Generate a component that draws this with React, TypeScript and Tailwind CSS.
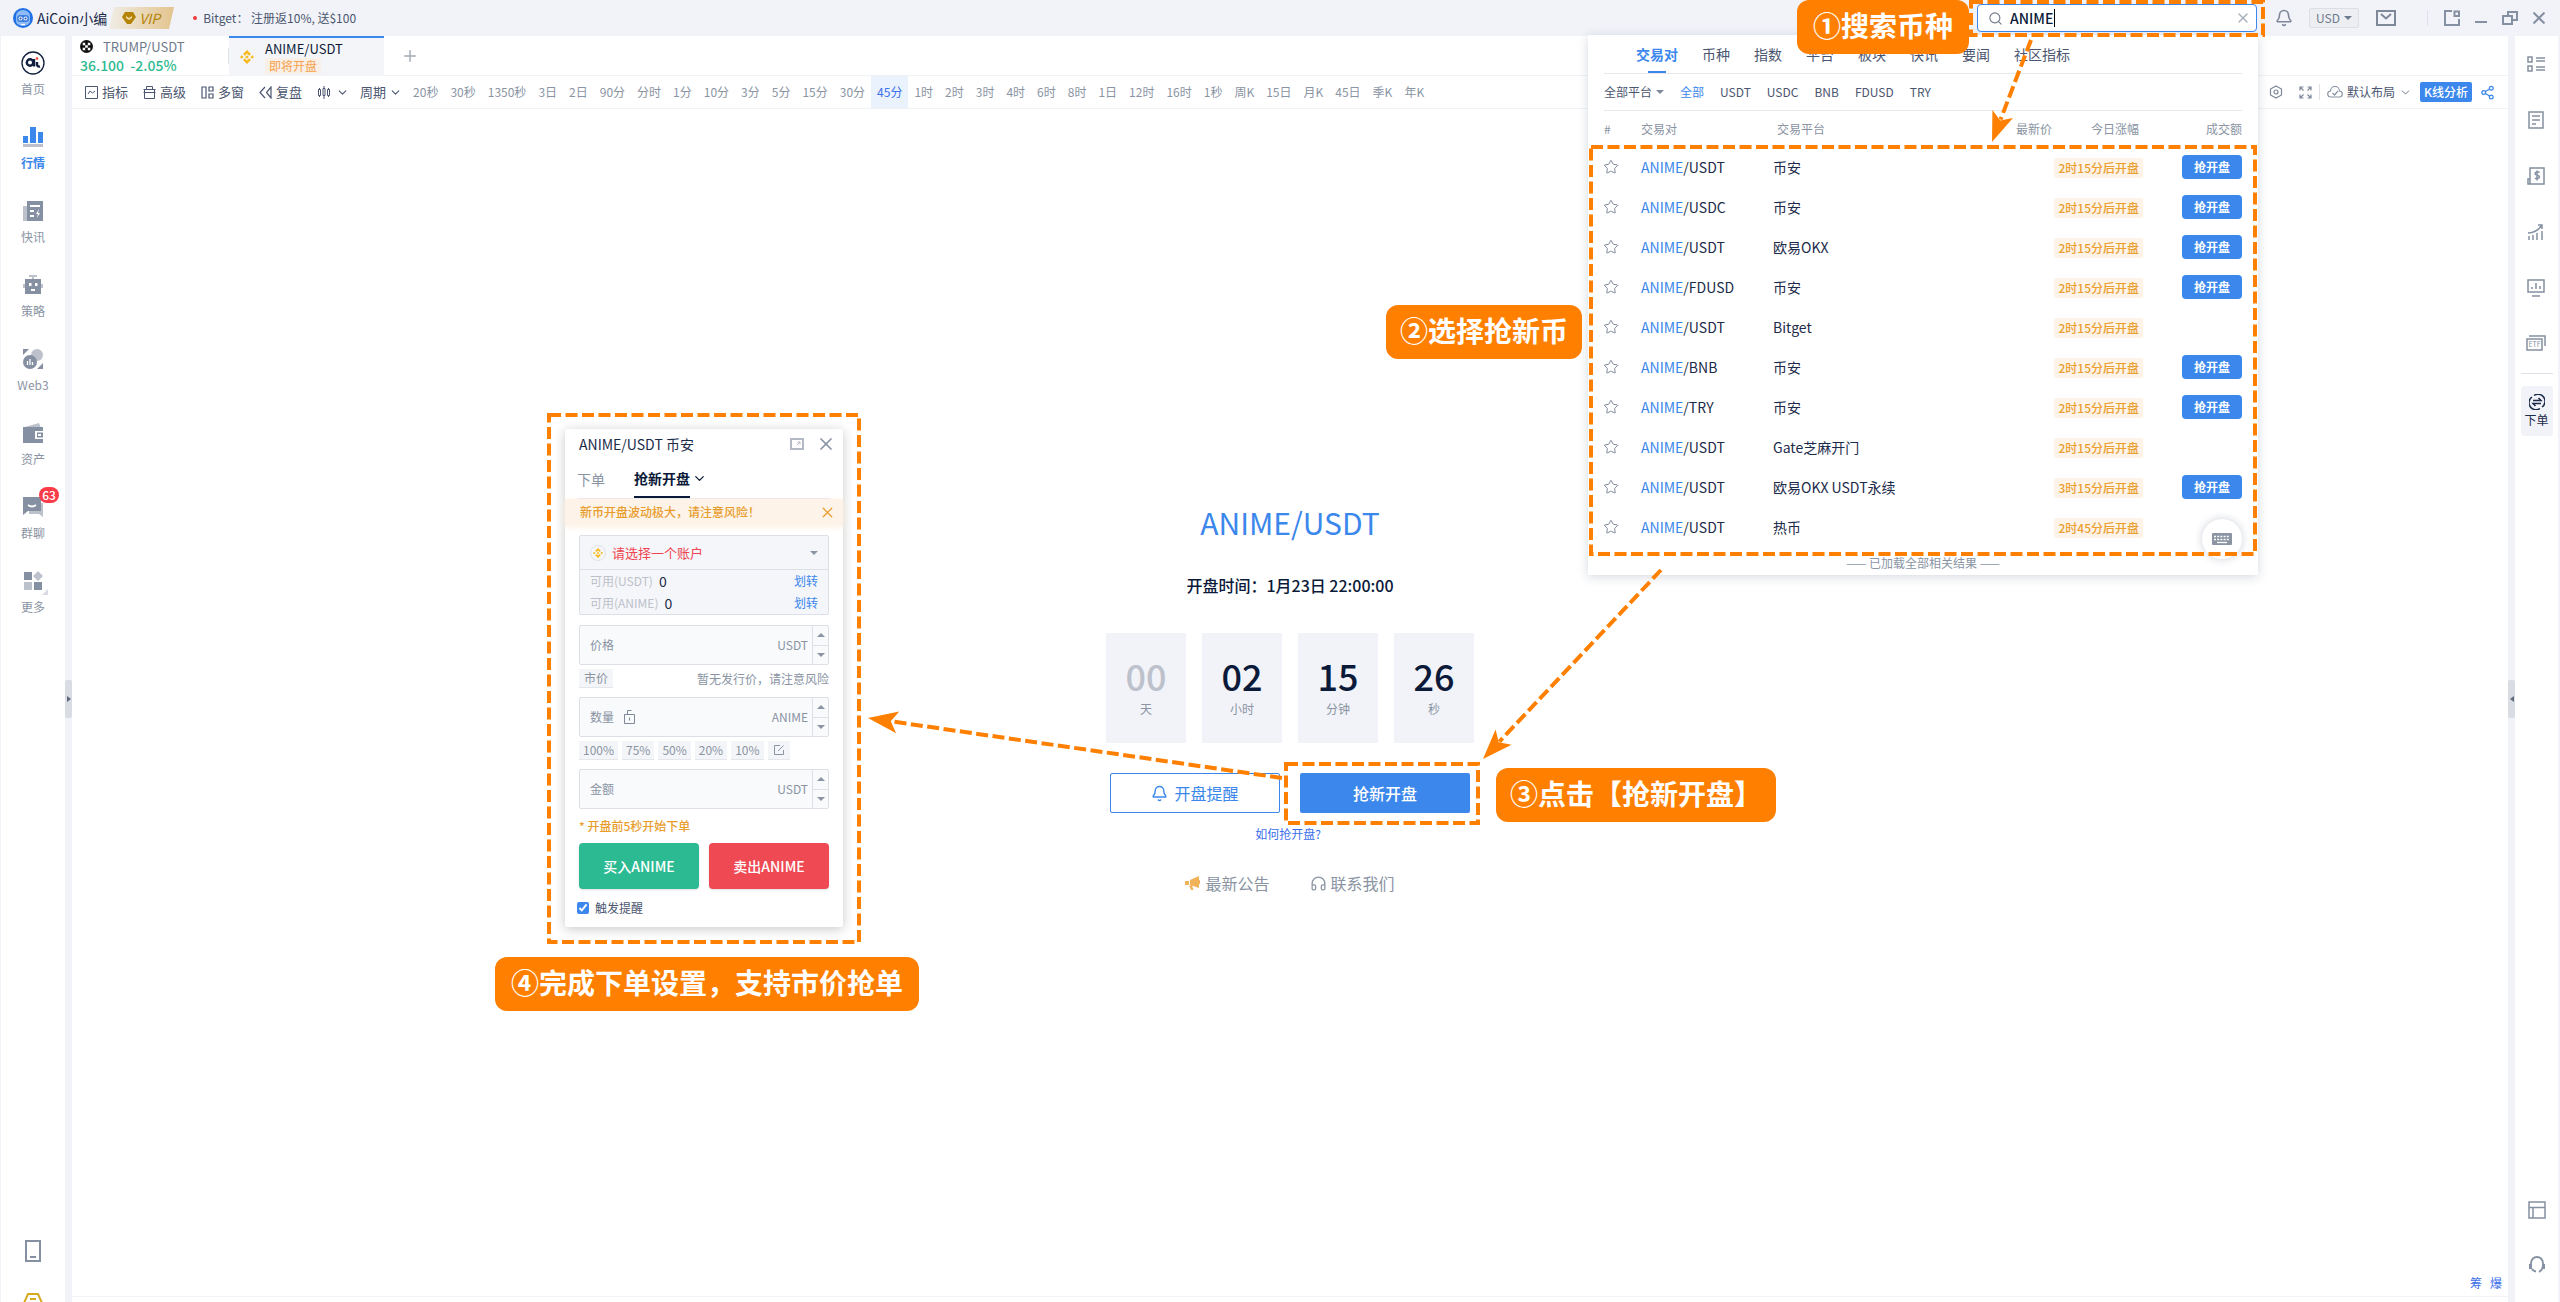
import type { ReactNode } from 'react';
import { Bell, ChevronDown, Headphones, Plus, Search, Share2, Star, X } from 'lucide-react';

const periods = [
  '20秒', '30秒', '1350秒', '3日', '2日', '90分', '分时', '1分', '10分', '3分', '5分', '15分', '30分', '45分',
  '1时', '2时', '3时', '4时', '6时', '8时', '1日', '12时', '16时', '1秒', '周K', '15日', '月K', '45日', '季K', '年K',
];

const results = [
  { quote: 'USDT', exchange: '币安', opens: '2时15分后开盘', canSnipe: true },
  { quote: 'USDC', exchange: '币安', opens: '2时15分后开盘', canSnipe: true },
  { quote: 'USDT', exchange: '欧易OKX', opens: '2时15分后开盘', canSnipe: true },
  { quote: 'FDUSD', exchange: '币安', opens: '2时15分后开盘', canSnipe: true },
  { quote: 'USDT', exchange: 'Bitget', opens: '2时15分后开盘', canSnipe: false },
  { quote: 'BNB', exchange: '币安', opens: '2时15分后开盘', canSnipe: true },
  { quote: 'TRY', exchange: '币安', opens: '2时15分后开盘', canSnipe: true },
  { quote: 'USDT', exchange: 'Gate芝麻开门', opens: '2时15分后开盘', canSnipe: false },
  { quote: 'USDT', exchange: '欧易OKX USDT永续', opens: '3时15分后开盘', canSnipe: true },
  { quote: 'USDT', exchange: '热币', opens: '2时45分后开盘', canSnipe: false },
];

const countdown = [
  { value: '00', unit: '天' },
  { value: '02', unit: '小时' },
  { value: '15', unit: '分钟' },
  { value: '26', unit: '秒' },
];

function Caret({ up = false, className = '' }: { up?: boolean; className?: string }) {
  return (
    <svg className={`h-1 w-2 shrink-0 ${className}`} viewBox="0 0 8 4" fill="currentColor" aria-hidden="true">
      <path d={up ? 'M0 4L4 0L8 4Z' : 'M0 0H8L4 4Z'} />
    </svg>
  );
}

function BinanceIcon({ className = 'size-4' }: { className?: string }) {
  return (
    <svg className={className} viewBox="0 0 16 16" fill="#f8b91c" aria-hidden="true">
      <path d="M8 0l4.500 4.500-2 2L8 4l-2.500 2.500-2-2zM2 6l2 2-2 2-2-2zM14 6l2 2-2 2-2-2zM8 6l2 2-2 2-2-2zM5.500 9.500L8 12l2.500-2.500 2 2L8 16l-4.500-4.500z" />
    </svg>
  );
}

// Dashed highlight drawn round the parent element's area
function Frame({ className }: { className: string }) {
  return (
    <div className={`pointer-events-none absolute z-30 ${className}`}>
      <svg className="block h-full w-full overflow-visible" aria-hidden="true">
        <rect width="100%" height="100%" fill="none" stroke="#ff8000" strokeWidth="4" strokeDasharray="12 4.500" />
      </svg>
    </div>
  );
}

function StepLabel({ className, children }: { className: string; children: ReactNode }) {
  return (
    <div className={`absolute z-40 flex h-[54px] items-center rounded-xl bg-[#ff8000] pb-1 text-[28px] font-bold whitespace-nowrap text-white ${className}`}>
      {children}
    </div>
  );
}

function Arrow({ x1, y1, x2, y2 }: { x1: number; y1: number; x2: number; y2: number }) {
  const angle = (Math.atan2(y1 - y2, x1 - x2) * 180) / Math.PI;
  const length = Math.hypot(x1 - x2, y1 - y2);
  return (
    <g transform={`translate(${x2} ${y2}) rotate(${angle})`}>
      <path d={`M${length} 0H24`} stroke="#ff8000" strokeWidth="4" strokeDasharray="12 4.500" />
      <path d="M0 0L30 -11L23 0L30 11Z" fill="#ff8000" />
    </g>
  );
}

function SearchPanel() {
  return (
    <div className="absolute top-[31px] -right-px z-20 w-[670px] bg-white px-4 pb-2 text-xs shadow-[0_2px_10px_rgba(30,45,80,0.18)]">
      <nav className="flex h-[39px] items-center gap-6 border-b border-[#e6e8ec] pl-8 text-sm text-[#4b5670]">
        <a href="#pair" className="relative flex h-full items-center font-bold text-[#3b87ec]">
          交易对
          <span className="absolute bottom-0 left-3 h-0.5 w-[18px] bg-[#3b87ec]" />
        </a>
        {['币种', '指数', '平台', '板块', '快讯', '要闻', '社区指标'].map((tab) => (
          <a key={tab} href="#tab">{tab}</a>
        ))}
      </nav>
      <div className="flex h-[37px] items-center gap-4 border-b border-[#e6e8ec] text-[#4b5670]">
        <button className="flex items-center gap-1">
          全部平台
          <Caret className="text-[#7e8899]" />
        </button>
        <button className="text-[#3b87ec]">全部</button>
        {['USDT', 'USDC', 'BNB', 'FDUSD', 'TRY'].map((q) => (
          <button key={q}>{q}</button>
        ))}
      </div>
      <div className="relative">
        <table className="w-full table-fixed">
          <colgroup>
            <col className="w-[37px]" />
            <col className="w-[132px]" />
            <col />
            <col className="w-[100px]" />
            <col className="w-[91px]" />
            <col className="w-[99px]" />
          </colgroup>
          <thead>
            <tr className="h-9 text-left text-[#8a94a3]">
              <th className="font-normal">#</th>
              <th className="font-normal">交易对</th>
              <th className="pl-1 font-normal">交易平台</th>
              <th className="text-right font-normal">最新价</th>
              <th className="pr-1 text-right font-normal">今日涨幅</th>
              <th className="text-right font-normal">成交额</th>
            </tr>
          </thead>
          <tbody>
            {results.map((r, i) => (
              <tr key={i} className="h-10 text-sm text-[#1c2b4a]">
                <td>
                  <Star size={16} strokeWidth={1.5} className="-ml-px text-[#7e8899]" />
                </td>
                <td className="whitespace-nowrap">
                  <span className="text-[#3b87ec]">ANIME</span>/{r.quote}
                </td>
                <td colSpan={2}>{r.exchange}</td>
                <td className="text-right">
                  <span className="inline-block h-5 rounded-xs bg-[#fdf3e8] px-1 text-xs leading-5 font-medium whitespace-nowrap text-[#eaa030]">
                    {r.opens}
                  </span>
                </td>
                <td className="text-right">
                  {r.canSnipe && (
                    <button className="h-6 w-[60px] rounded bg-[#3b87ec] text-xs font-bold text-white">抢开盘</button>
                  )}
                </td>
              </tr>
            ))}
          </tbody>
        </table>
        <Frame className="top-9 -right-[13px] -left-[13px] h-[407px]" />
      </div>
      <p className="h-5 pt-2 text-center leading-4 text-[#8a94a3]">—— 已加载全部相关结果 ——</p>
      <button
        aria-label="键盘"
        className="absolute right-4 bottom-4 flex size-10 items-center justify-center rounded-full bg-white shadow-[0_0_8px_rgba(30,45,80,0.22)]"
      >
        <svg width="20" height="12" viewBox="0 0 20 12">
          <rect width="20" height="12" rx="1" fill="#8a94a3" />
          <path d="M2 3.500H18M2 6.500H18" stroke="#fff" strokeWidth="1.500" strokeDasharray="2 1.200" />
          <path d="M5 9.500H15" stroke="#fff" strokeWidth="1.300" />
        </svg>
      </button>
    </div>
  );
}

function Header() {
  return (
    <header className="relative z-20 flex h-9 shrink-0 items-center bg-[#f1f3f8] pl-[13px]">
      <svg width="20" height="20" viewBox="0 0 20 20" aria-hidden="true">
        <circle cx="10" cy="10" r="10" fill="#1f6fe5" />
        <path d="M3 8a7 6 0 0 1 14 0v5a7 5 0 0 1-14 0z" fill="#8fbcf5" />
        <rect x="4" y="7" width="12" height="7" rx="3" fill="#3f7fe0" />
        <circle cx="7.500" cy="10.500" r="2" fill="#e9f2ff" />
        <circle cx="12.500" cy="10.500" r="2" fill="#e9f2ff" />
        <circle cx="7.500" cy="10.500" r="1" fill="#2450a8" />
        <circle cx="12.500" cy="10.500" r="1" fill="#2450a8" />
        <path d="M8 16.500h4" stroke="#fff" strokeWidth="1.200" />
      </svg>
      <span className="ml-1 text-sm text-[#1c2b4a]">AiCoin小编</span>
      <a href="#vip" className="relative ml-0.5 flex h-[22px] w-[65px] items-center">
        <svg className="absolute inset-0" width="65" height="22" aria-hidden="true">
          <defs>
            <linearGradient id="vip" x1="0" x2="1">
              <stop offset="0" stopColor="#f0ede6" />
              <stop offset="1" stopColor="#e3c48e" />
            </linearGradient>
          </defs>
          <path d="M5 0H65L60 22H0Z" fill="url(#vip)" />
          <path d="M16 5h8l3 5-5 7h-4l-5-7z" fill="#b48407" />
          <path d="M17 9l3 2 3-2v2l-3 2-3-2z" fill="#f3dca7" />
        </svg>
        <span className="relative ml-[30px] text-sm text-[#b48407] italic">VIP</span>
      </a>
      <span className="ml-[19px] size-1 rounded-full bg-[#f23c3c]" />
      <span className="ml-1.5 text-xs text-[#4b5670]">Bitget： 注册返10%, 送$100</span>

      <div className="relative mr-[18px] ml-auto h-7 w-[280px]">
        <label className="flex h-7 items-center rounded border border-[#3b87ec] bg-white pl-2.5">
          <Search size={15} strokeWidth={1.800} className="text-[#6f7a8c]" />
          <input aria-label="搜索" defaultValue="ANIME" className="ml-[7px] w-[200px] text-sm font-medium text-[#0b1a38] outline-none" />
          <span className="absolute top-[5px] left-[77px] h-[18px] w-px bg-black" />
        </label>
        <button aria-label="清除" className="absolute top-1.5 right-1.5 text-[#a3abb8]">
          <X size={16} strokeWidth={1.800} />
        </button>
        <SearchPanel />
        <Frame className="-top-0.5 -right-1.5 -bottom-[3px] -left-1.5" />
      </div>

      <button aria-label="通知" className="text-[#7e8899]">
        <Bell size={18} strokeWidth={2.200} />
      </button>
      <label className="mr-[17px] ml-4 flex h-5 items-center gap-1 rounded-xs border border-[#dcdfe5] bg-[#eceef2] px-1.5 text-[#6f7a8c]">
        <select aria-label="货币" className="appearance-none text-xs outline-none">
          <option>USD</option>
        </select>
        <Caret />
      </label>
      <button aria-label="邮件" className="text-[#7e8899]">
        <svg width="20" height="16" viewBox="0 0 20 16" fill="none" stroke="currentColor" strokeWidth="2">
          <path d="M1 1H19V15H1ZM5 4L10 8.500L15 4" />
        </svg>
      </button>
      <span className="mr-4 ml-[31px] h-4 w-px bg-[#dfe2e8]" />
      <div className="flex items-center gap-[15px] pr-[15px] text-[#8590a2]">
        <button aria-label="弹出">
          <svg width="16" height="16" viewBox="0 0 16 16" fill="none" stroke="currentColor" strokeWidth="2">
            <path d="M8 1H1V15H15V9M10.500 1.500H15V6H10.500Z" />
          </svg>
        </button>
        <button aria-label="最小化" className="pt-2">
          <svg width="12" height="2"><path d="M0 0H12V2H0Z" fill="currentColor" /></svg>
        </button>
        <button aria-label="还原">
          <svg width="16" height="14" viewBox="0 0 16 14" fill="none" stroke="currentColor" strokeWidth="2">
            <path d="M1 5H10V13H1ZM6 5V1H15V9H10" />
          </svg>
        </button>
        <button aria-label="关闭">
          <svg width="12" height="12" viewBox="0 0 12 12" stroke="currentColor" strokeWidth="2">
            <path d="M0.500 0.500L11.500 11.500M11.500 0.500L0.500 11.500" />
          </svg>
        </button>
      </div>
    </header>
  );
}

const menu: { label: string; icon: ReactNode }[] = [
  {
    label: '首页',
    icon: (
      <svg width="24" height="24" viewBox="0 0 24 24" fill="none" stroke="#0f1f3d">
        <circle cx="12" cy="12" r="11" strokeWidth="1.300" />
        <circle cx="9" cy="11.500" r="3.200" strokeWidth="2.400" />
        <path d="M13 8v7.500M16 11v3a2.500 2.500 0 0 0 3 1.500" strokeWidth="2.400" />
        <circle cx="16" cy="7.500" r="1.300" fill="#ef4130" stroke="none" />
      </svg>
    ),
  },
  {
    label: '行情',
    icon: (
      <svg width="20" height="20" viewBox="0 0 20 20">
        <path d="M0 9h5v7H0zM7 0h6v16H7zM15 5h5v11h-5z" fill="#3b87ec" />
        <path d="M0 17h20v3H0z" fill="#bcc1cb" />
      </svg>
    ),
  },
  {
    label: '快讯',
    icon: (
      <svg width="20" height="20" viewBox="0 0 20 20">
        <path d="M0 5h5v15H0z" fill="#bcc1cb" />
        <path d="M4 0h16v20H4z" fill="#8590a2" />
        <path d="M7 5h10M7 10h4M7 15h4" stroke="#fff" strokeWidth="2" />
        <path d="M16 8l-3 5h2l-1 4 3-5h-2z" fill="#fff" />
      </svg>
    ),
  },
  {
    label: '策略',
    icon: (
      <svg width="20" height="20" viewBox="0 0 20 20">
        <path d="M6 0h8v2h-3v2H9V2H6zM0 9h20v4H0z" fill="#bcc1cb" />
        <path d="M2 4h16v15H2z" fill="#8590a2" />
        <path d="M6 8h2.500v3H6zM12 8h2.500v3H12zM8 14h4v2H8z" fill="#fff" />
      </svg>
    ),
  },
  {
    label: 'Web3',
    icon: (
      <svg width="20" height="20" viewBox="0 0 20 20">
        <path d="M0 0h6L0 6zM20 20h-6l6-6z" fill="#8590a2" />
        <circle cx="14" cy="6" r="6" fill="#bcc1cb" />
        <circle cx="7" cy="13" r="7" fill="#8590a2" />
        <path d="M4.500 12v4M7 10v6M9.500 13v3" stroke="#fff" strokeWidth="1.300" />
      </svg>
    ),
  },
  {
    label: '资产',
    icon: (
      <svg width="20" height="20" viewBox="0 0 20 20">
        <path d="M2 4L16 0l2 5H2z" fill="#bcc1cb" />
        <path d="M0 4h20v16H0z" fill="#8590a2" />
        <path d="M20 8h-8v8h8v-1.500h-6v-5h6z" fill="#fff" />
        <path d="M15 11h3v2h-3z" fill="#fff" />
      </svg>
    ),
  },
  {
    label: '群聊',
    icon: (
      <svg width="20" height="20" viewBox="0 0 20 20">
        <path d="M6 6h14v14l-4-3H6z" fill="#bcc1cb" />
        <path d="M0 0h18v14H5l-5 4z" fill="#8590a2" />
        <path d="M5 8q4 3 8 0" stroke="#fff" strokeWidth="1.800" fill="none" />
      </svg>
    ),
  },
  {
    label: '更多',
    icon: (
      <svg className="overflow-visible" width="20" height="20" viewBox="0 0 20 20">
        <path d="M1 1h8v8H1zM11 11h8v8h-8z" fill="#8590a2" />
        <path d="M1 11h8v8H1zM15 0l5 5-5 5-5-5z" fill="#bcc1cb" />
        <path d="M25 18v6h-6z" fill="#d9dce2" />
      </svg>
    ),
  },
];

function LeftSidebar() {
  return (
    <aside className="flex w-16 shrink-0 flex-col items-center bg-white pt-[15px] text-xs leading-4 text-[#8a94a3]">
      {menu.map((item) => (
        <a
          key={item.label}
          href="#menu"
          className={`relative flex h-[74px] flex-col items-center gap-1.5 ${item.label === '行情' ? 'font-bold text-[#3b87ec]' : ''}`}
        >
          <span className="flex h-6 items-center">{item.icon}</span>
          {item.label}
          {item.label === '群聊' && (
            <span className="absolute -top-2 left-[18px] h-4 w-5 rounded-full bg-[#fb3b48] text-center text-xs font-medium text-white">63</span>
          )}
        </a>
      ))}
      <div className="mt-auto -mb-[11px] flex flex-col items-center gap-[31px]">
        <svg width="16" height="22" viewBox="0 0 16 22" fill="none" stroke="#8590a2" strokeWidth="2">
          <path d="M1 1H15V21H1ZM5 17H11" />
        </svg>
        <svg width="20" height="20" viewBox="0 0 20 20" fill="none" stroke="#d6a921" strokeWidth="2">
          <path d="M5 1H15L19 10L15 19H5L1 10ZM7 6H13" />
        </svg>
      </div>
    </aside>
  );
}

function RightSidebar() {
  const icons = [
    <path d="M1 2h4v5H1zM1 11h4v5H1zM9 3h9M9 6h9M9 12h9M9 15h9" />,
    <path d="M2 1h14v16H2zM5 5h8M5 9h8M5 13h4" />,
    <path d="M3 1h14v16H1v-5h2zM3 12v5M12.500 5.500c-1-1-4.500-1-4.500 1s4.500 1.500 4.500 3.500-3.500 2-4.500 1M10 3.500v10" />,
    <path d="M2 17v-4M6 17v-5M10 17v-7M15 17V8M1 10c5 0 10-2 14-8M11 2h4v4" />,
    <path d="M1 1h16v12H1zM5 17h8M5 10V8M9 10V4M13 10V7" />,
  ];
  return (
    <aside className="mr-0.5 flex w-[43px] shrink-0 flex-col items-center bg-white pt-[19px] text-[#8590a2]">
      <div className="flex flex-col gap-[38px]">
        {icons.map((icon, i) => (
          <svg key={i} width="18" height="18" viewBox="0 0 18 18" fill="none" stroke="currentColor" strokeWidth="1.500">
            {icon}
          </svg>
        ))}
        <svg className="-ml-px" width="20" height="16" viewBox="0 0 20 16" fill="none" stroke="currentColor" strokeWidth="1.500">
          <path d="M1 4h15v11H1zM3 1h16v10" />
          <text x="8.500" y="12" fontSize="7" textAnchor="middle" stroke="none" fill="currentColor">ETF</text>
        </svg>
      </div>
      <hr className="mt-[22px] mb-3 w-8 border-[#dfe2e8]" />
      <button className="flex h-[50px] w-8 flex-col items-center justify-center gap-0.5 rounded bg-[#f1f3f8] text-xs text-[#1c2b4a]">
        <svg width="16" height="16" viewBox="0 0 16 16" fill="none" stroke="currentColor" strokeWidth="1.500">
          <path d="M5 1.500A7 7 0 0 1 13 13M11 14.500A7 7 0 0 1 3 3M4 6.500h8L9.500 4M12 9.500H4L6.500 12" />
        </svg>
        下单
      </button>
      <div className="mt-auto mb-7 flex flex-col items-center gap-[37px]">
        <svg width="18" height="18" viewBox="0 0 18 18" fill="none" stroke="currentColor" strokeWidth="1.500">
          <path d="M1 1H17V17H1ZM1 6.500H17M5 6.500V17" />
        </svg>
        <svg width="18" height="18" viewBox="0 0 18 18" fill="none" stroke="currentColor" strokeWidth="1.800">
          <path d="M3 9V7a6 6 0 0 1 12 0v2a8 8 0 0 1-4 7M4 13q1 2 4 2.500" />
          <path d="M1 8h3v5H1zM14 8h3v5h-3z" fill="currentColor" stroke="none" />
        </svg>
      </div>
    </aside>
  );
}

function PairTabs() {
  return (
    <div className="flex h-10 shrink-0 border-b border-[#f1f3f8] text-[13px]">
      <a href="#trump" className="flex w-[156px] flex-col justify-center pl-2 leading-[18px]">
        <span className="flex items-center gap-2.5 text-[#6f7a8c]">
          <svg width="13" height="13" viewBox="0 0 12 12" aria-hidden="true">
            <circle cx="6" cy="6" r="6" fill="#111" />
            <path d="M2.500 2.500h2.300v2.300H2.500zM7.200 2.500h2.300v2.300H7.200zM4.800 4.800h2.400v2.400H4.800zM2.500 7.200h2.300v2.300H2.500zM7.200 7.200h2.300v2.300H7.200z" fill="#fff" />
          </svg>
          TRUMP/USDT
        </span>
        <span className="text-sm leading-[18px] font-medium text-[#2eba92]">36.100&nbsp; -2.05%</span>
      </a>
      <span className="mt-3 h-4 w-px bg-[#dfe2e8]" />
      <a href="#anime" className="flex w-[155px] items-center gap-[11px] border-t-2 border-[#3b87ec] bg-[#f4f5f9] pl-[11px]">
        <BinanceIcon className="size-3.5" />
        <span className="flex flex-col items-start text-[#0b1a38]">
          <span className="leading-[18px]">ANIME/USDT</span>
          <span className="rounded-xs bg-[#f8f0e6] px-1 text-xs leading-4 text-[#f7a04b]">即将开盘</span>
        </span>
      </a>
      <button aria-label="新建标签" className="ml-[17px] text-[#a3abb8]">
        <Plus size={18} strokeWidth={2} />
      </button>
    </div>
  );
}

function Toolbar() {
  return (
    <div className="flex h-[33px] shrink-0 items-center border-b border-[#f1f3f8] pr-[13px] pl-[13px] text-[13px] whitespace-nowrap text-[#4b5670]">
      <div className="flex items-center gap-[15px]">
        <button className="flex items-center gap-1">
          <svg width="13" height="13" viewBox="0 0 13 13" fill="none" stroke="currentColor">
            <path d="M0.500 0.500h12v12H0.500zM3 8l2-3 2.500 2L10 5" />
          </svg>
          指标
        </button>
        <button className="flex items-center gap-1">
          <svg width="13" height="13" viewBox="0 0 13 13" fill="none" stroke="currentColor">
            <path d="M0.500 3.500h12M0.500 6.500h12M1.500 3.500v9h10v-9M3.500 3V0.500h6V3" />
          </svg>
          高级
        </button>
        <button className="flex items-center gap-1">
          <svg width="13" height="13" viewBox="0 0 13 13" fill="none" stroke="currentColor" strokeWidth="1.200">
            <path d="M1 1h4v11H1zM8 1h4v4H8zM8 8h4v4H8z" />
          </svg>
          多窗
        </button>
        <button className="flex items-center gap-1">
          <svg width="13" height="13" viewBox="0 0 13 13" fill="none" stroke="currentColor" strokeWidth="1.200">
            <path d="M6 1L1 6.500 6 12M12 1v11L7.500 6.500z" />
          </svg>
          复盘
        </button>
        <button className="flex items-center gap-[5px]" aria-label="K线类型">
          <svg width="14" height="14" viewBox="0 0 14 14" fill="none" stroke="currentColor">
            <path d="M1.500 4.500h2v6h-2zM2.500 3v1.500M2.500 10.500V12M6 3.500h2v7H6zM7 1v2.500M7 10.500V14M10.500 4.500h2v6h-2zM11.500 3v1.500M11.500 10.500V12" />
          </svg>
          <ChevronDown size={13} />
        </button>
        <button className="-ml-1 flex items-center gap-[3px]">
          周期
          <ChevronDown size={13} />
        </button>
      </div>
      <div className="ml-[5px] flex h-full text-xs text-[#8a94a3]">
        {periods.map((p) => (
          <button key={p} className={`px-1.5 ${p === '45分' ? 'bg-[#eaf2fd] text-[#3b6fec]' : ''}`}>{p}</button>
        ))}
      </div>
      <div className="ml-auto flex items-center text-xs text-[#7e8899]">
        <svg width="14" height="14" viewBox="0 0 14 14" fill="none" stroke="currentColor" strokeWidth="1.200">
          <path d="M7 1l5.500 3v6L7 13 1.500 10V4z" />
          <circle cx="7" cy="7" r="2" />
        </svg>
        <svg className="ml-4" width="13" height="13" viewBox="0 0 13 13" fill="none" stroke="currentColor" strokeWidth="1.200">
          <path d="M1 4.500V1h3.500M8.500 1H12v3.500M12 8.500V12H8.500M4.500 12H1V8.500M1 1l3.500 3.500M12 1L8.500 4.500M12 12L8.500 8.500M1 12l3.500-3.500" />
        </svg>
        <span className="mx-[7px] h-4 w-px bg-[#dfe2e8]" />
        <button className="flex items-center gap-1 text-[#4b5670]">
          <svg width="16" height="12" viewBox="0 0 16 12" fill="none" stroke="#8a94a3" strokeWidth="1.200">
            <path d="M4 11a3 3 0 0 1-.5-6 4.500 4.500 0 0 1 9 0 3 3 0 0 1-.5 6zM5.500 7L7.500 9 11 5" />
          </svg>
          默认布局
          <ChevronDown size={13} strokeWidth={1.500} />
        </button>
        <button className="mr-2 ml-2 h-5 rounded-xs bg-[#3b87ec] px-1 font-medium text-white">K线分析</button>
        <Share2 size={15} strokeWidth={2} className="text-[#3b87ec]" />
      </div>
    </div>
  );
}

function OpeningInfo() {
  return (
    <section className="flex flex-col items-center pt-[393px]">
      <h1 className="text-[30px] leading-10 text-[#3b87ec]">ANIME/USDT</h1>
      <p className="mt-[31px] mb-9 text-base leading-6 font-medium text-[#0b1a38]">开盘时间：1月23日 22:00:00</p>
      <div className="flex gap-4">
        {countdown.map((c) => (
          <div key={c.unit} className="flex h-[110px] w-20 flex-col items-center bg-[#f2f3f8] pt-[22px]">
            <span className={`text-4xl leading-10 font-medium ${c.value === '00' ? 'text-[#bcc1cb]' : 'text-[#0b1a38]'}`}>{c.value}</span>
            <span className="mt-1.5 text-xs leading-4 text-[#8a94a3]">{c.unit}</span>
          </div>
        ))}
      </div>
      <div className="mt-[30px] flex gap-5">
        <button className="flex h-10 w-[170px] items-center justify-center gap-1.5 rounded-xs border border-[#3b87ec] text-base text-[#3b87ec]">
          <Bell size={17} strokeWidth={2} />
          开盘提醒
        </button>
        <div className="relative">
          <button className="h-10 w-[170px] rounded-xs bg-[#3b87ec] text-base font-medium text-white">抢新开盘</button>
          <Frame className="-top-[9px] -right-2 -bottom-2.5 -left-3.5" />
        </div>
      </div>
      <a href="#help" className="mt-3 mr-1 text-xs leading-[18px] text-[#3b6fec]">如何抢开盘?</a>
      <div className="mt-7 flex gap-10 text-base leading-6 text-[#8a94a3]">
        <a href="#news" className="flex items-center gap-1">
          <svg width="16" height="16" viewBox="0 0 16 16" fill="#f0b35a" aria-hidden="true">
            <path d="M5 5L14 1v12L5 10zM0 6h4v4H0zM4 10.500h3L8.500 15H6z" />
            <path d="M14 4.500q2 2.500 0 5z" fill="#e89a35" />
          </svg>
          最新公告
        </a>
        <a href="#contact" className="flex items-center gap-1">
          <Headphones size={17} strokeWidth={1.800} />
          联系我们
        </a>
      </div>
    </section>
  );
}

function Field({ id, label, unit, children }: { id: string; label: string; unit: string; children?: ReactNode }) {
  return (
    <div className="flex h-10 items-center rounded-xs border border-[#dcdfe6] bg-[#f9fafc] pl-2.5 text-xs text-[#8a94a3]">
      <label htmlFor={id}>{label}</label>
      {children}
      <input id={id} className="min-w-0 flex-1 outline-none" />
      <span className="mr-1">{unit}</span>
      <div className="flex h-full w-4 flex-col border-l border-[#dcdfe6]">
        <button type="button" aria-label="增加" className="flex flex-1 items-center justify-center border-b border-[#dcdfe6]"><Caret up /></button>
        <button type="button" aria-label="减少" className="flex flex-1 items-center justify-center"><Caret /></button>
      </div>
    </div>
  );
}

function OrderPanel() {
  return (
    <section className="absolute top-[429px] left-[565px] z-10 w-[278px] rounded-xs bg-white pb-2.5 text-xs text-[#8a94a3] shadow-[0_2px_12px_rgba(0,0,0,0.22)]">
      <Frame className="-inset-x-4 -top-3.5 -bottom-[15px]" />
      <div className="flex h-[30px] items-center pr-[7px] pl-3.5">
        <h2 className="text-sm text-[#1c2b4a]">ANIME/USDT 币安</h2>
        <button aria-label="弹出" className="ml-auto text-[#b4bac5]">
          <svg width="14" height="12" viewBox="0 0 14 12" fill="none" stroke="currentColor">
            <path d="M1 1H13V11H1Z" strokeWidth="2" />
            <path d="M7 7L10 4M7.500 4H10V6.500" />
          </svg>
        </button>
        <button aria-label="关闭" className="ml-3 text-[#8590a2]">
          <X size={20} strokeWidth={2} className="block" />
        </button>
      </div>
      <nav className="mx-3 flex h-10 gap-[29px] border-b border-[#e6e8ec] text-sm">
        <a href="#order" className="flex items-center">下单</a>
        <a href="#snipe" className="flex items-center gap-0.5 font-bold text-[#0b1a38]">
          <span className="flex h-full items-center border-b-2 border-[#0b1a38]">抢新开盘</span>
          <ChevronDown size={15} />
        </a>
      </nav>
      <div className="flex h-[26px] items-center justify-between bg-[#fdf3e8] pr-[7px] pl-[15px] font-medium text-[#e89c2c] shadow-[0_2px_6px_#fdf0e0]">
        新币开盘波动极大，请注意风险！
        <button aria-label="关闭提示"><X size={17} strokeWidth={1.800} className="block" /></button>
      </div>

      <form className="flex flex-col px-3.5 pt-2.5">
        <div className="mb-2.5 flex h-20 flex-col rounded-xs border border-[#dcdfe6] bg-[#f5f6f9] leading-[22px]">
          <label className="flex h-[34px] shrink-0 items-center border-b border-[#dcdfe6] px-2.5">
            <span className="flex size-4 items-center justify-center rounded-full border border-[#dfe2e8]">
              <BinanceIcon className="size-2.5" />
            </span>
            <select aria-label="账户" className="ml-1.5 flex-1 appearance-none text-[13px] text-[#ef4552] outline-none">
              <option>请选择一个账户</option>
            </select>
            <Caret />
          </label>
          {['USDT', 'ANIME'].map((coin) => (
            <div key={coin} className="flex px-2.5 text-[#bcc1cb]">
              可用({coin})
              <span className="ml-1.5 text-sm leading-[22px] text-[#1c2b4a]">0</span>
              <a href="#transfer" className="ml-auto text-[#3b87ec]">划转</a>
            </div>
          ))}
        </div>
        <Field id="price" label="价格" unit="USDT" />
        <div className="my-1 flex h-6 items-start justify-between leading-5">
          <button type="button" className="border-b border-[#e3e6eb] bg-[#f4f5f8] px-[5px] leading-[18px]">市价</button>
          <span>暂无发行价，请注意风险</span>
        </div>
        <Field id="amount" label="数量" unit="ANIME">
          <svg className="ml-2.5" width="11" height="14" viewBox="0 0 11 14" fill="none" stroke="#7e8899">
            <path d="M0.500 4.500h10v9H0.500zM3.500 4.500v-4h4M5.500 7.500v3" />
          </svg>
        </Field>
        <div className="my-1 flex h-6 items-start gap-1">
          {['100%', '75%', '50%', '20%', '10%'].map((pct) => (
            <button key={pct} type="button" className="border-b border-[#e3e6eb] bg-[#f4f5f8] px-1 leading-[18px]">{pct}</button>
          ))}
          <button type="button" aria-label="自定义" className="flex h-[19px] items-center border-b border-[#e3e6eb] bg-[#f4f5f8] px-1.5">
            <svg width="10" height="10" viewBox="0 0 10 10" fill="none" stroke="currentColor">
              <path d="M6 0.500H0.500v9h9V5M4 6L9.500 0.500" />
            </svg>
          </button>
        </div>
        <Field id="total" label="金额" unit="USDT" />
        <p className="py-2 leading-[18px] font-medium text-[#e89c2c]">* 开盘前5秒开始下单</p>
        <div className="flex gap-2.5 text-sm font-medium text-white">
          <button type="button" className="h-[46px] flex-1 rounded bg-[#2cba92] shadow">买入ANIME</button>
          <button type="button" className="h-[46px] flex-1 rounded bg-[#ef4953] shadow">卖出ANIME</button>
        </div>
        <label className="mt-2.5 -ml-0.5 flex items-center gap-1.5 leading-[18px] text-[#4b5670]">
          <input type="checkbox" defaultChecked className="size-3 accent-[#3b87ec]" />
          触发提醒
        </label>
      </form>
    </section>
  );
}

export default function App() {
  return (
    <div className="relative flex h-screen flex-col overflow-hidden bg-[#f1f3f8] font-['Noto_Sans_CJK_SC',sans-serif]">
      <Header />
      <div className="flex min-h-0 flex-1 pl-px">
        <LeftSidebar />
        <div className="flex w-[7px] shrink-0 items-center pb-[584px]">
          <button aria-label="展开左栏" className="mt-auto flex h-[38px] w-full items-center justify-center rounded-xs bg-[#d9dce2] text-[#5f6a7d]">
            <svg width="4" height="6"><path d="M0 0L4 3L0 6Z" fill="currentColor" /></svg>
          </button>
        </div>
        <main className="flex min-w-0 flex-1 flex-col bg-white">
          <PairTabs />
          <Toolbar />
          <OpeningInfo />
          <div className="mt-auto mb-[5px] flex justify-end gap-2 border-b border-[#f1f3f8] pr-1.5 pb-1 text-xs leading-[18px] text-[#3b6fec]">
            <a href="#chips">筹</a>
            <a href="#liq">爆</a>
          </div>
        </main>
        <div className="flex w-[7px] shrink-0 items-center pb-[584px]">
          <button aria-label="展开右栏" className="mt-auto flex h-[38px] w-full items-center justify-center rounded-xs bg-[#d9dce2] text-[#5f6a7d]">
            <svg width="4" height="6"><path d="M4 0L0 3L4 6Z" fill="currentColor" /></svg>
          </button>
        </div>
        <RightSidebar />
      </div>

      <OrderPanel />

      {/* Step by step guide on top of the page */}
      <svg className="pointer-events-none absolute inset-0 z-30 h-full w-full" aria-hidden="true">
        <Arrow x1={2031} y1={40} x2={1992} y2={142} />
        <Arrow x1={1661} y1={570} x2={1483} y2={759} />
        <Arrow x1={1282} y1={778} x2={868} y2={718} />
      </svg>
      <StepLabel className="top-0 left-[1797px] px-4">①搜索币种</StepLabel>
      <StepLabel className="top-[305px] left-[1386px] px-3.5">②选择抢新币</StepLabel>
      <StepLabel className="top-[768px] left-[1496px] px-3.5">③点击【抢新开盘】</StepLabel>
      <StepLabel className="top-[957px] left-[495px] px-4">④完成下单设置，支持市价抢单</StepLabel>
    </div>
  );
}
